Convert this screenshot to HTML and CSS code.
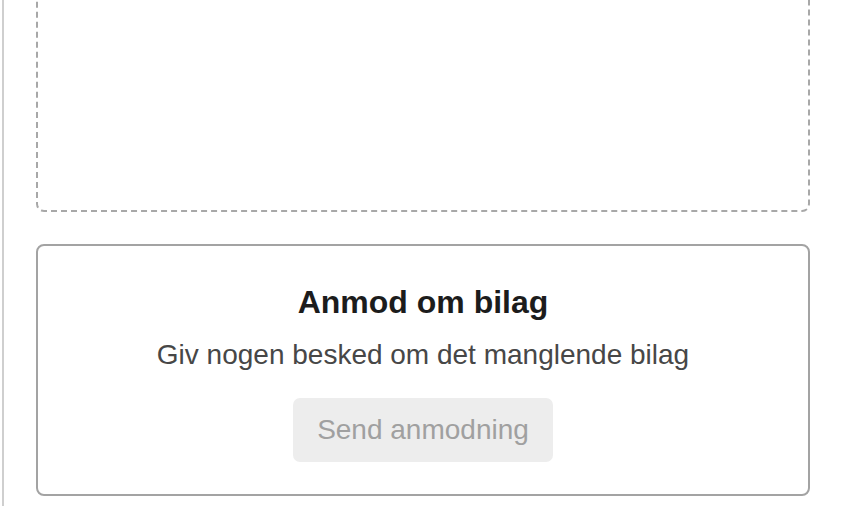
FILE: index.html
```html
<!DOCTYPE html>
<html lang="da">
<head>
<meta charset="utf-8">
<link rel="stylesheet" href="styles.css">
</head>
<body>
<div class="page">
  <div class="dropzone"></div>
  <div class="card">
    <h2 class="card-title">Anmod om bilag</h2>
    <p class="card-text">Giv nogen besked om det manglende bilag</p>
    <button class="card-button" type="button" disabled>Send anmodning</button>
  </div>
</div>
</body>
</html>
```
FILE: styles.css
```css
html, body {
  margin: 0;
  padding: 0;
  background: #fff;
}
body {
  font-family: "Liberation Sans", Arial, Helvetica, sans-serif;
  width: 842px;
  height: 506px;
  overflow: hidden;
}
.page {
  margin-left: 2px;
  border-left: 2px solid #cfcfcf;
  padding: 0 32px 0 32px;
  height: 506px;
  display: flex;
  flex-direction: column;
  gap: 32px;
}
.dropzone {
  margin-top: -100px;
  height: 308px;
  border: 2px dashed #a8a8a8;
  border-radius: 8px;
  flex: none;
}
.card {
  border: 2px solid #a3a3a3;
  border-radius: 8px;
  padding: 38px 32px 32px;
  display: flex;
  flex-direction: column;
  align-items: center;
  flex: none;
}
.card-title {
  margin: 0;
  font-size: 32px;
  line-height: 37px;
  font-weight: bold;
  color: #1c1c1c;
}
.card-text {
  margin: 18px 0 0;
  font-size: 28px;
  line-height: 32px;
  color: #474747;
}
.card-button {
  margin-top: 27px;
  font-family: inherit;
  font-size: 28px;
  line-height: 32px;
  padding: 16px 24px;
  border: none;
  border-radius: 7px;
  background: #ededed;
  color: #a0a0a0;
}
```
